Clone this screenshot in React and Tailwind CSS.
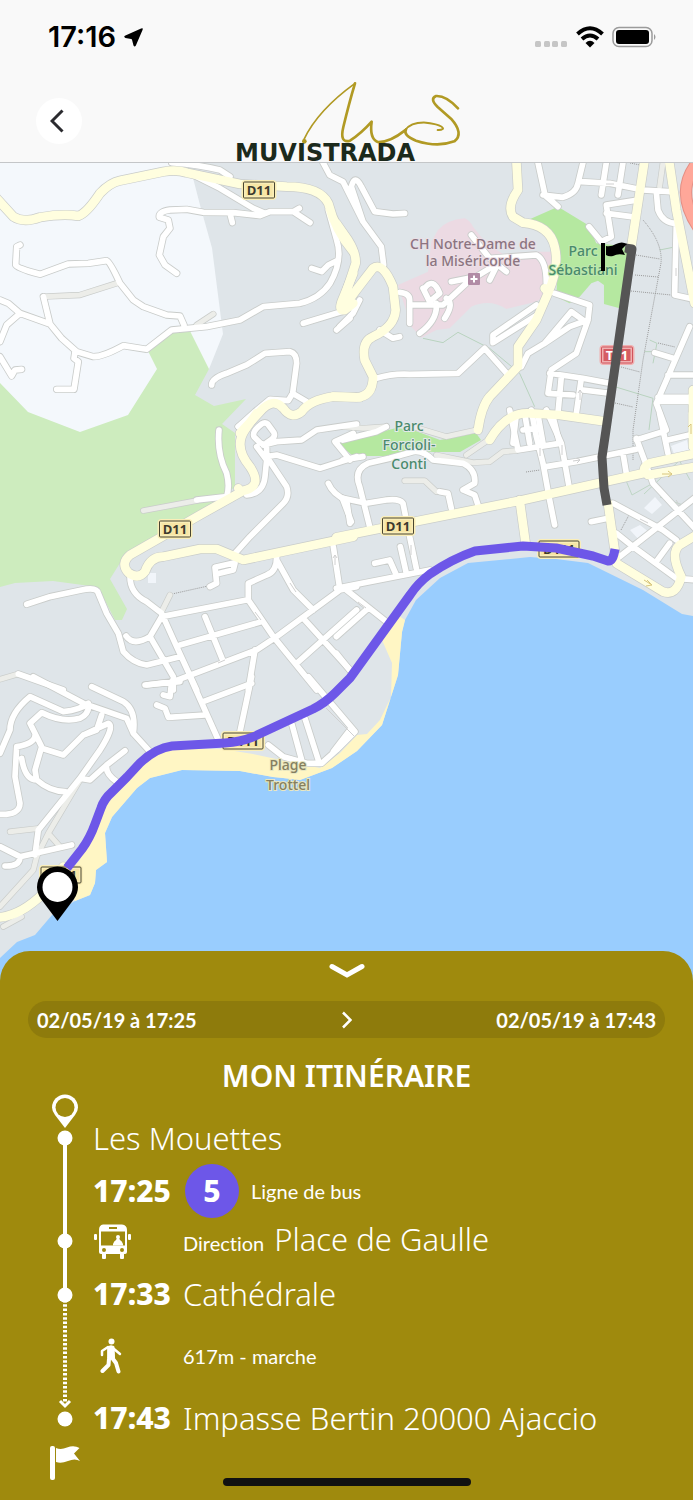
// Map data is stored per tile, three units per screen pixel
const TILES = [
  {
    id: 'nw',
    transform: 'translate(0 160) scale(0.3333)',
    tracks: 'M130 410L240 405L350 370M590 495L640 462',
    streets: [
      'M515 8Q600 15 660 30L690 50',
      'M580 45L660 85L760 145L795 160',
      'M530 340L495 315L478 285L490 230L510 205L505 180L478 172Q475 155 510 150L560 148L610 157L700 158L780 167L810 155L880 155L930 188M880 155L898 145M690 160L697 188',
      'M60 255L50 260L47 315Q50 325 120 343L205 312L265 310L320 302Q330 305 360 370L400 420L430 440L500 465L540 468L552 495',
      'M0 420L25 430L60 460L150 492L185 535L230 575L280 590Q310 590 370 557L440 568L515 510L620 500L720 480L790 440L900 430Q960 415 990 370Q1030 300 1010 240L985 150',
      'M60 460L20 495L0 545M0 590L35 648L45 630L65 628M130 410L150 492M225 575L222 595L235 605L222 688L170 688',
      'M935 325L965 335L985 315L1015 300',
      'M635 675Q635 655 680 640L740 615L795 580L870 575Q890 580 890 610L878 700L920 725M878 700L865 722L810 718L765 755L715 800',
      'M910 490L1025 455M1010 510L1050 475',
    ],
    roads:
      'M-10 115L40 170Q70 190 120 172Q190 160 235 168Q260 160 300 100Q330 68 360 62L490 35Q530 28 560 38L720 72L860 80Q960 80 985 130Q1005 210 1060 275M1060 340L1025 425Q1015 455 1035 450L1060 430M1080 712L1000 710Q930 720 905 755Q875 780 850 745Q820 710 780 755L720 820',
  },
  {
    id: 'ne',
    transform: 'translate(343 160) scale(0.3333)',
    tracks: 'M960 8L950 80M0 800L60 805L130 800',
    streets: [
      'M-64 0L-40 45L0 65L60 185L115 260L122 315',
      'M60 185L25 80Q35 40 55 80L95 155L150 162L185 160',
      'M585 8L605 100M600 105L660 112Q700 100 705 70L720 8M605 105L645 140M715 65L800 70L900 90L980 95M790 8L775 105M840 8L825 105',
      'M940 95L945 150Q960 190 1000 190L995 405L1040 415M885 120L790 135L805 230L775 245L738 200M790 160L865 170',
      'M385 225L440 295L580 285Q610 300 610 370M440 295L490 335M465 310L440 360M465 310L400 350L325 365M370 370L300 435L205 435M245 385Q270 350 290 400L260 425L240 385M310 415Q335 430 305 475M280 430Q285 480 230 520M170 397Q200 400 200 420V490',
      'M635 400L740 435L735 480L700 580L625 630L615 700L690 705M735 480L680 500L605 550L555 580L535 620M605 550L685 455L720 480M620 640L720 655L800 670M655 650L645 760M715 655L700 760M720 690L800 700',
      'M580 435L450 525L450 548L590 460',
      'M100 655Q150 640 200 643L345 640L425 565L500 650M110 510L150 535L170 530M50 420L30 460L-10 500',
      'M1040 500L975 650L940 730L970 810M935 578L990 595M975 645H1060M945 712H1060M945 724H1060',
      'M520 765L510 850M545 760L560 850M585 765L600 850M630 770L650 850',
    ],
    roads:
      'M-20 190L15 240Q40 280 38 310L5 410Q-15 450 0 445L40 390L90 325Q120 305 150 380L158 450Q155 500 90 530Q55 545 65 600L90 650Q90 710 40 712L-30 710M520 0L525 90Q490 140 510 170L540 188Q620 195 635 260Q650 320 615 400L580 480L525 560L525 620L440 710Q415 740 405 810M440 840Q490 755 560 760L650 765L790 785M905 0L865 260M978 0L1000 150L1055 430M1050 690V820M605 385L612 392',
  },
  {
    id: 'w',
    transform: 'translate(0 420) scale(0.3333)',
    tracks: 'M430 272L590 242M510 525L485 575M0 778L55 762',
    streets: [
      'M785 12Q795 5 803 12L822 38Q827 48 815 58L798 70Q788 76 778 66L762 50Q755 35 785 12',
      'M790 75L830 65L905 60L950 30L1070 12M770 80L800 120L795 170Q790 220 740 225M715 20L735 5',
      'M800 85L800 110L860 200Q870 230 850 250L750 350L705 400M800 110L830 105L960 145L1070 110M985 190Q1000 225 1040 240L1050 310M1060 40L1005 65L1050 120',
      'M657 30Q650 100 680 160Q690 200 680 230L590 240',
      'M80 553L150 530L245 510Q290 500 295 520L320 580L355 640L370 695Q400 730 440 735L540 710M390 470Q390 520 440 545L485 580L530 680L590 810',
      'M485 590L740 540M485 590L450 650Q400 680 378 648M450 650L520 770V810M540 675L785 605M615 590L670 725',
      'M440 795L520 785L770 690L830 650L1020 510L1000 380M1020 510L1070 500M830 410Q830 455 800 465L745 490V540L820 650L950 810M830 420L880 510L940 570',
      'M910 595L1050 750M890 730L1070 570M765 690L745 810M55 762L190 810',
      'M705 428L645 442L650 490L630 500M705 430L700 450L650 462',
    ],
    roads:
      'M770 -20L735 30Q700 80 750 140Q790 200 730 212L600 285L390 405Q360 430 385 458Q415 480 435 455Q450 410 490 410L600 387L650 387L730 420L1060 350M715 205L720 212',
  },
  {
    id: 'e',
    transform: 'translate(343 420) scale(0.3333)',
    tracks: 'M185 182L245 182L280 215M210 20L310 50L400 30M520 92L480 95L440 125L390 128L280 105M370 105L450 50',
    streets: [
      'M-20 505L260 450M95 430L140 420L160 465M172 380L190 460M220 445L200 350L180 250Q170 235 130 240L70 250L0 235M80 320L50 200Q30 150 75 130L140 115L210 95Q240 90 270 120L360 130Q400 150 395 190L360 210L395 225L405 255M325 265L315 220L290 215',
      'M0 240L25 305M0 60L100 35L130 20M0 120L60 110',
      'M10 510L130 605M70 570L-20 650M-20 700L20 750',
      'M500 -30L525 90L650 70M565 -30L580 50L600 130L620 240L635 315M540 30L580 25M610 -30L655 70L680 210M610 140L700 125L880 88M840 100L850 160M745 305L795 295',
      'M880 55L930 190L1060 330M880 60L960 35M950 -20L975 100M975 60L1060 40M810 250L960 330L1000 360M1060 230L830 410M820 340L870 380L1000 475L1060 480M940 425L980 370',
    ],
    roads:
      'M-20 352L540 240L900 160M1060 100L920 130Q890 145 915 165L1060 140M530 240L548 370M795 250L815 390L820 430L960 515Q1000 530 1015 470Q980 400 1010 375L1060 345M1050 -20V80',
  },
  {
    id: 'sw',
    transform: 'translate(0 680) scale(0.3333)',
    tracks: 'M30 455L120 445M240 300L145 460L180 500M145 460L110 530L100 570L0 680M10 740L65 710',
    streets: [
      'M100 -10L250 70L380 115L400 160L450 215M275 20L370 65Q410 90 400 160',
      'M0 220L30 150Q30 100 90 50L190 95Q240 90 265 70Q270 100 240 115Q190 130 125 98L90 130L105 160L125 200L105 270L110 300M105 160Q110 190 50 200L45 290L60 370Q60 405 0 403',
      'M65 235Q75 300 110 300Q150 335 195 335M240 295L115 450L105 525M125 205L190 225L250 165L290 150L305 105M250 165L325 130Q345 140 300 210L240 295L270 300L320 255L375 212M320 255Q315 280 350 305',
      'M0 500L60 530L215 495M60 530Q60 560 15 558',
      'M435 15L540 5M515 5L510 50L490 45M470 75L495 85L505 112L615 105M570 -10L655 180M610 65L755 10M755 -10L720 155',
      'M805 195L850 230L920 250L965 250L1010 210L1065 155L925 -10M875 130L905 240M915 115L955 240M1000 215L1050 150',
    ],
    roads: 'M-15 714Q60 710 130 640L190 560',
  },
]

const FOOTPATHS = [
  'M643 220Q663 243 661 263L643 360L633 430L633 460M636 255L660 259M635 275L658 277M631 291L671 295M621 367L640 372M615 403L633 407M658 343L675 347M630 163L640 165',
  'M172 594L208 586M526 472L540 470M629 515L621 530',
]

const SHORE =
  '405,620 402,632 398,675 382,725 357,751 332,768 300,780 283,778 273,777 240,771 182,770 150,778 137,788 112,817 105,833 107,862 96,870 95,883 90,895 75,901'

const ROUTE =
  'M67 868L82 849Q90 838 95 824L101 808Q104 799 112 792L127 777L140 763Q156 748 172 746L225 743Q240 742 253 737L313 709Q325 703 335 693L350 678L410 595Q418 583 430 574Q452 559 475 551L523 546L556 548L593 556L608 561Q613 562 615 549'

function Shield({ x, y, w = 31, label, red }) {
  return (
    <g>
      <rect x={x - w / 2} y={y - 8} width={w} height="16" rx="2" fill={red ? '#d65c62' : '#f7e6a6'} stroke={red ? '#f0b0b0' : '#faeeb8'} strokeWidth="4" />
      <rect x={x - w / 2} y={y - 8} width={w} height="16" rx="1" fill="none" stroke={red ? '#d0545c' : '#4a4632'} strokeWidth="1" />
      <text x={x} y={y + 5} textAnchor="middle" className="font-['Open_Sans',sans-serif] text-[13px] font-bold" fill={red ? '#ffffff' : '#3d3a2e'}>
        {label}
      </text>
    </g>
  )
}

function Label({ x, y, lines, color, leading = 19, halo = '#e4e9ec' }) {
  return (
    <text
      textAnchor="middle"
      className="font-['Noto_Sans',sans-serif] text-[14px] font-medium"
      fill={color}
      stroke={halo}
      strokeWidth="2"
      paintOrder="stroke"
    >
      {lines.map((line, i) => (
        <tspan key={line} x={x} y={y + i * leading}>
          {line}
        </tspan>
      ))}
    </text>
  )
}

function CityMap() {
  return (
    <svg viewBox="0 163 693 837" className="block w-full" role="img" aria-label="Carte d'Ajaccio">
      <rect y="163" width="693" height="837" fill="#dfe5e9" />
      <polygon points="0,163 188,163 193,178 200,205 212,248 223,334 209,369 128,440 0,440" fill="#f4f8fc" />
      <polygon
        points="0,383 28,412 80,432 128,415 157,369 148,351 170,330 190,331 209,369 195,395 214,406 246,399 222,424 235,433 235,487 183,525 125,555 110,579 127,609 122,620 115,620 100,591 90,586 53,581 15,583 0,587"
        fill="#cdecbe"
      />
      <g transform="translate(343 160) scale(0.3333)">
        <path d="M265 245L285 210Q310 180 365 175Q380 180 390 200L430 250L480 282L560 275L625 275L620 400L580 425L490 447Q440 415 385 440L320 505L280 510L235 533L205 500L165 375L255 335Z" fill="#ecdae3" />
        <path d="M560 178L645 140L735 195L760 250L860 260L830 445L783 432V375L765 362L745 370L710 410L680 430L640 410L645 300L610 210Z" fill="#b5e8a0" />
        <path d="M240 535L300 548L345 517L440 565L530 640L575 740M950 270L1000 260M815 680L930 715L918 810M905 575L930 575M920 540L942 550L930 610" fill="none" stroke="#b9d3bf" strokeWidth="3" />
      </g>
      <path d="M338 443L370 435L396 428L413 430L440 440L476 433L481 440L460 452L433 452L410 450L390 456L353 456Z" fill="#b5e8a0" />
      <path d="M644 494L680 460M660 497L683 505M625 478L632 495L655 482M672 447L690 480" fill="none" stroke="#bfd6c5" strokeWidth="1" />
      <path d="M630 530L640 525L650 533L640 541ZM671 446L687 440L689 450L674 454ZM644 508L655 497L662 505L652 514ZM148 573H156V583H148Z" fill="#f1f5fa" />
      <polygon
        points={`693,616 682,614 643,590 588,563 556,559 530,557 468,563 440,578 416,600 ${SHORE} 52,915 35,935 17,942 0,958 0,1000 693,1000`}
        fill="#99cdfe"
      />
      <polygon
        points={`399,616 ${SHORE} 62,880 80,860 100,800 130,770 150,752 170,748 222,749 253,754 290,762 320,768 340,753 357,735 367,734 380,720 391,697 392,663 382,640`}
        fill="#fff6c4"
      />

      <g fill="none" stroke="#9a9a9a" strokeWidth="1" strokeDasharray="1 1">
        {FOOTPATHS.map((d) => (
          <path key={d} d={d} />
        ))}
      </g>
      <path d="M702 157Q670 190 702 233" fill="none" stroke="#e58f84" strokeWidth="12" />
      <path d="M702 157Q670 190 702 233" fill="none" stroke="#ffa799" strokeWidth="10" />

      {/* casings first so that crossings stay open */}
      <g fill="none" strokeLinecap="round" strokeLinejoin="round">
        {TILES.map((t) => (
          <g key={t.id} transform={t.transform} stroke="#c9ccca">
            <path d={t.tracks} strokeWidth="19" />
            <path d={t.streets.join('')} strokeWidth="22" />
            <path d={t.roads} strokeWidth="30" />
          </g>
        ))}
        {TILES.map((t) => (
          <g key={t.id} transform={t.transform}>
            <path d={t.tracks} stroke="#ecede9" strokeWidth="15" />
            <path d={t.streets.join('')} stroke="#ffffff" strokeWidth="17" />
          </g>
        ))}
        {TILES.map((t) => (
          <path key={t.id} transform={t.transform} d={t.roads} stroke="#fffedf" strokeWidth="26" />
        ))}
      </g>
      <g fill="none" stroke="#d9c67c" strokeWidth="1">
        <path d="M662 474H672M668 471L672 474L668 477M644 580L652 585M647 580L652 585L646 586M691 434V424M688 427L691 424" />
      </g>
      <g fill="none" stroke="#d0d0d0" strokeWidth="1">
        <path d="M335 555V565M333 558L335 555L337 558M290 583L296 592M255 612L261 620M411 545V555M540 448V456M562 445V455M573 461L580 460M577 458L580 460L577 463M640 519L648 523M676 500L680 506M580 390V400M578 393L580 390L582 393M218 663L225 660M606 184H614M676 268V276M326 708L354 736M358 602L366 608" />
      </g>

      <Label x={473} y={249} leading={17} lines={['CH Notre-Dame de', 'la Miséricorde']} color="#8b7480" halo="#ecdfe6" />
      <Label x={583} y={256} lines={['Parc', 'Sébastiani']} color="#4a8a6c" halo="#bfe8b0" />
      <Label x={409} y={431} lines={['Parc', 'Forcioli-', 'Conti']} color="#4a8a6c" />
      <Label x={288} y={770} leading={20} lines={['Plage', 'Trottel']} color="#857f60" halo="#e8e6c0" />
      <rect x="468" y="273" width="12" height="12" rx="1" fill="#b18ba5" />
      <path d="M474 275.500V282.500M470.500 279H477.500" stroke="#ffffff" strokeWidth="2" />

      <Shield x={259} y={190} label="D11" />
      <Shield x={175} y={529} label="D11" />
      <Shield x={398} y={526} label="D11" />
      <Shield x={559} y={549} w={40} label="D111" />
      <Shield x={243} y={741} w={40} label="D111" />
      <Shield x={61} y={875} w={40} label="D111" />
      <Shield x={617} y={355} label="T21" red />

      <path d={ROUTE} fill="none" stroke="#6d57e8" strokeWidth="9" strokeLinejoin="round" />
      <path d="M625 248L632 249L630 262L606 430L602 457L604 488L607 505" fill="none" stroke="#555555" strokeWidth="9" strokeLinejoin="round" />
      <circle cx="631" cy="251" r="5" fill="#555555" />
      <path d="M601 243H605V271H601ZM606 246Q611 247 616 244Q622 241 627 244L622 249L625 255Q618 253 613 256Q609 257 606 255Z" fill="#000000" />
      <path d="M57.500 921L41 899Q37 893 37 887A20.500 20.500 0 0 1 78 887Q78 893 74 899Z" fill="#000000" />
      <circle cx="57.500" cy="887" r="15" fill="#ffffff" />
    </svg>
  )
}

function StatusBar() {
  return (
    <div className="flex h-[74px] items-center justify-between pr-9 pl-[48px]">
      <div className="flex items-center gap-2">
        <span className="font-['Inter',sans-serif] text-[29px] leading-8 font-semibold text-black">17:16</span>
        <svg viewBox="0 0 20 20" className="size-[19px]" aria-hidden="true">
          <path d="M18 0.500Q20.500 -0.500 19.500 2L12.500 18.500Q11.200 20.500 10 18.500L8.500 12.500Q8.300 11.700 7.500 11.500L1.500 10.500Q-1 9.300 1.500 8Z" />
        </svg>
      </div>
      <div className="flex items-center gap-2">
        <svg viewBox="0 0 33 22" className="h-[22px] w-[33px]" fill="#c6c6c6" aria-hidden="true">
          <rect x="0" y="15" width="6" height="6" rx="1.500" />
          <rect x="9" y="15" width="6" height="6" rx="1.500" />
          <rect x="17" y="15" width="6" height="6" rx="1.500" />
          <rect x="26" y="15" width="6" height="6" rx="1.500" />
        </svg>
        <svg viewBox="0 0 28 22" className="h-[22px] w-7" fill="none" stroke="#000000" strokeWidth="4" aria-hidden="true">
          <path d="M1.500 8Q14 -3.500 26.500 8" />
          <path d="M6 13Q14 6 22 13" />
          <path d="M9.500 17Q14 12.500 18.500 17L14 21.500Z" fill="#000000" stroke="none" />
        </svg>
        <svg viewBox="0 0 45 22" className="h-[22px] w-[45px]" aria-hidden="true">
          <rect x="1" y="1.500" width="39" height="19" rx="6" fill="none" stroke="#9b9b9b" strokeWidth="1.500" />
          <rect x="4" y="4" width="33" height="14" rx="3" />
          <path d="M42 8Q45 11 42 14Z" fill="#9b9b9b" />
        </svg>
      </div>
    </div>
  )
}

function Logo() {
  return (
    <svg viewBox="24 24 696 246" className="h-[82px] w-[232px] overflow-visible" role="img" aria-label="Muvistrada">
      <g fill="none" stroke="#b19a24" strokeLinecap="round" strokeLinejoin="round">
        <path d="M249 202Q290 115 402 34" strokeWidth="5" />
        <path d="M402 34Q385 90 367 165Q355 215 387 206Q420 185 452 149Q445 200 470 210Q505 212 552 175" strokeWidth="8" />
        <path d="M552 175Q570 150 615 152Q665 158 666 170Q660 175 650 174" strokeWidth="6" />
        <path d="M711 109Q675 70 645 72Q625 80 650 105L690 140Q730 185 700 208Q650 227 585 206Q545 190 555 172" strokeWidth="8" />
      </g>
      <circle cx="250" cy="208" r="7" fill="#b19a24" />
      <text x="42" y="267" className="font-['DejaVu_Sans',sans-serif] text-[72px] font-bold" fill="#1c2a1c">
        MUVISTRADA
      </text>
    </svg>
  )
}

function Rail() {
  return (
    <svg viewBox="50 1094 30 390" className="h-[390px] w-[30px] shrink-0" aria-hidden="true">
      <path d="M65 1128L55 1115Q52 1111 52 1107.500A13 13 0 0 1 78 1107.500Q78 1111 75 1115Z" fill="#ffffff" />
      <circle cx="65" cy="1107.500" r="9.500" fill="#9f8a0d" />
      <path d="M65 1138V1295" stroke="#ffffff" strokeWidth="4" />
      <path d="M65 1300V1402" stroke="#ffffff" strokeWidth="4" strokeDasharray="2.500 1.800" />
      <path d="M60 1401L65 1406L70 1401" fill="none" stroke="#ffffff" strokeWidth="3" />
      <g fill="#ffffff">
        <circle cx="65" cy="1138" r="7.500" />
        <circle cx="65" cy="1241" r="7.500" />
        <circle cx="65" cy="1295" r="7.500" />
        <circle cx="65" cy="1419" r="7.500" />
        <rect x="50" y="1446" width="5" height="34" rx="2" />
        <path d="M56 1448Q61 1450 67 1447.500Q74 1445 79.500 1448L74 1453.500L80 1461Q75 1458 68 1461Q61 1464 56 1462Z" />
      </g>
    </svg>
  )
}

function BusIcon() {
  return (
    <svg viewBox="0 0 37 36" className="ml-px h-9 w-[37px]" fill="#ffffff" aria-hidden="true">
      <path fillRule="evenodd" d="M9 0.500H28Q33 1 33 6V28Q33 30 31 30H30V34Q30 35 29 35H27Q26 35 26 34V30H12V34Q12 35 11 35H9Q8 35 8 34V30H7Q5 30 5 28V6Q5 1 9 0.500ZM15 3V5H23V3ZM7 7.500V21.500H31V7.500ZM10 24A2 2 0 1 0 10 28A2 2 0 1 0 10 24ZM28 24A2 2 0 1 0 28 28A2 2 0 1 0 28 24Z" />
      <rect x="0" y="10" width="3" height="6" rx="1" />
      <rect x="34" y="10" width="3" height="6" rx="1" />
      <circle cx="24" cy="13" r="2" />
      <path d="M23 14H25L26 16Q28 17 29 20V21.500H19V20Q20 17 22 16Z" />
    </svg>
  )
}

function WalkIcon() {
  return (
    <svg viewBox="0 0 22 36" className="ml-[7px] h-9 w-[22px]" fill="none" stroke="#ffffff" strokeLinecap="round" strokeLinejoin="round" aria-hidden="true">
      <circle cx="11.500" cy="3.500" r="3" fill="#ffffff" stroke="none" />
      <path d="M8 8.500Q11 7 14 8.500L14.500 20L8 20Z" fill="#ffffff" strokeWidth="1" />
      <path d="M8 9L2 13V17M14 11L20 16" strokeWidth="2.500" />
      <path d="M11.500 19L16 25L18.500 33.500M9 21L8.500 27L2.500 33" strokeWidth="4" />
    </svg>
  )
}

function Time({ children }) {
  return <time className="w-[90px] shrink-0 text-[30px] font-extrabold">{children}</time>
}

function App() {
  return (
    <div className="relative flex flex-col overflow-hidden bg-[#9f8a0d]">
      <header className="border-b border-[#c4c6c8] bg-[#f9f9f9]">
        <StatusBar />
        <div className="flex h-[88px] items-end justify-between pr-9 pl-9">
          <button type="button" aria-label="Retour" className="mb-[18px] flex size-[46px] items-center justify-center rounded-full bg-white">
            <svg viewBox="0 0 14 24" className="mr-1 h-6 w-3.5" fill="none" stroke="#2b2b2f" strokeWidth="3" aria-hidden="true">
              <path d="M12.500 1.500L2 12L12.500 22.500" />
            </svg>
          </button>
          <Logo />
          <div className="w-[50px]" />
        </div>
      </header>

      <CityMap />

      <section className="relative -mt-[49px] rounded-t-[30px] bg-[#9f8a0d] pb-4 text-white">
        <button type="button" aria-label="Réduire" className="mx-auto block pt-3">
          <svg viewBox="0 0 36 17" className="h-[17px] w-9" fill="none" stroke="#ffffff" strokeWidth="5" strokeLinecap="round" aria-hidden="true">
            <path d="M3 3.500L18 12L33 3.500" />
          </svg>
        </button>

        <div className="mx-7 mt-[21px] flex h-[37px] items-center justify-between rounded-full bg-[#8e7b0c] px-[9px] font-['Lato',sans-serif] text-[20px] font-bold">
          <time>02/05/19 à 17:25</time>
          <svg viewBox="0 0 10 18" className="h-[18px] w-2.5" fill="none" stroke="#ffffff" strokeWidth="2.500" aria-hidden="true">
            <path d="M1 1.500L8.500 9L1 16.500" />
          </svg>
          <time>02/05/19 à 17:43</time>
        </div>

        <h1 className="mt-5 text-center font-['Noto_Sans',sans-serif] text-[30px] leading-9 font-semibold">MON ITINÉRAIRE</h1>

        <div className="flex pl-[50px]">
          <Rail />
          <ol className="ml-[13px] flex-1 pt-[18px] font-['Noto_Sans',sans-serif] text-[31px] leading-none font-light [font-variant-ligatures:none]">
            <li className="flex h-[52px] items-center">Les Mouettes</li>
            <li className="flex h-[54px] items-center">
              <Time>17:25</Time>
              <span className="ml-0.5 flex size-[54px] items-center justify-center rounded-full bg-[#6d57e8] text-[30px] font-extrabold">5</span>
              <span className="ml-3 font-['Lato',sans-serif] text-[20px] font-normal">Ligne de bus</span>
            </li>
            <li className="flex h-12 items-center">
              <div className="w-[90px] shrink-0">
                <BusIcon />
              </div>
              <p className="flex items-baseline gap-2.5 pb-1.5">
                <span className="font-['Lato',sans-serif] text-[20px] font-normal">Direction</span>
                <span>Place de Gaulle</span>
              </p>
            </li>
            <li className="flex h-14 items-center">
              <Time>17:33</Time>
              Cathédrale
            </li>
            <li className="flex h-[68px] items-center">
              <div className="w-[90px] shrink-0">
                <WalkIcon />
              </div>
              <span className="font-['Lato',sans-serif] text-[20px] font-normal">617m - marche</span>
            </li>
            <li className="flex h-14 items-center">
              <Time>17:43</Time>
              Impasse Bertin 20000 Ajaccio
            </li>
          </ol>
        </div>
        <div className="absolute bottom-3.5 left-1/2 h-2 w-[248px] -translate-x-1/2 rounded-full bg-[#111111]" />
      </section>
    </div>
  )
}

export default App
